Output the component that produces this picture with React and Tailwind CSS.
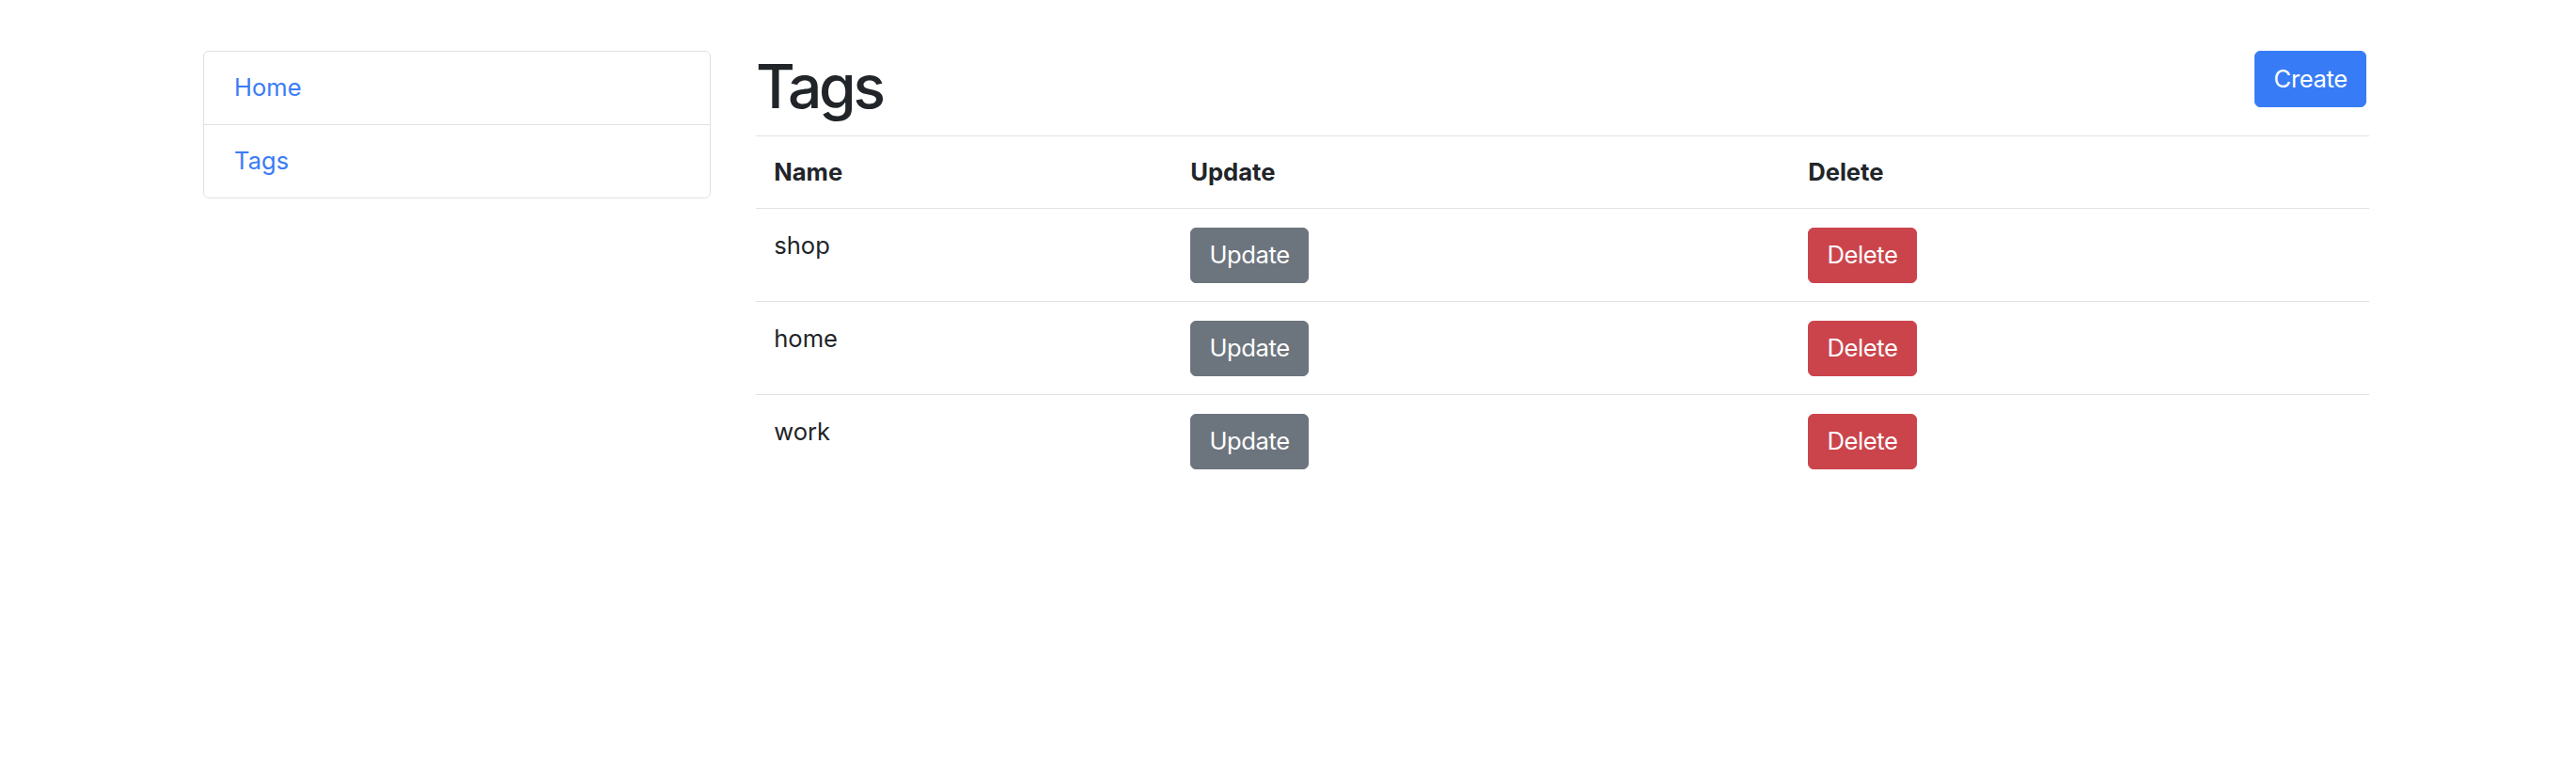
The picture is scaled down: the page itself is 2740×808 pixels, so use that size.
const tags = ['shop', 'home', 'work'];

function Sidebar() {
  return (
    <div className="w-[540px] shrink-0 self-start rounded-[6px] border border-[#dee2e6] bg-white">
      <a href="#" className="block px-[32px] py-[19.2px] leading-[38.4px] text-[#3a7cf6]">
        Home
      </a>
      <a href="#" className="block border-t border-[#dee2e6] px-[32px] py-[19.2px] leading-[38.4px] text-[#3a7cf6]">
        Tags
      </a>
    </div>
  );
}

function TagTable() {
  return (
    <table className="w-full table-fixed border-collapse text-left">
      <thead>
        <tr className="border-t border-b border-[#dee2e6]">
          <th className="w-[443px] px-[19.2px] py-[19.2px] align-bottom font-bold leading-[38.4px]">Name</th>
          <th className="w-[657px] px-[19.2px] py-[19.2px] align-bottom font-bold leading-[38.4px]">Update</th>
          <th className="px-[19.2px] py-[19.2px] align-bottom font-bold leading-[38.4px]">Delete</th>
        </tr>
      </thead>
      <tbody>
        {tags.map((tag, i) => (
          <tr key={tag} className={i > 0 ? 'border-t border-[#dee2e6]' : ''}>
            <td className="px-[19.2px] py-[19.2px] align-top leading-[38.4px]">{tag}</td>
            <td className="px-[19.2px] py-[19.2px] align-top">
              <button className="rounded-[6px] border border-[#6c747d] bg-[#6c747d] px-[19.2px] py-[9.6px] leading-[38.4px] tracking-[-0.015em] text-white">
                Update
              </button>
            </td>
            <td className="px-[19.2px] py-[19.2px] align-top">
              <button className="rounded-[6px] border border-[#cb444c] bg-[#cb444c] px-[19.2px] py-[9.6px] leading-[38.4px] tracking-[-0.015em] text-white">
                Delete
              </button>
            </td>
          </tr>
        ))}
      </tbody>
    </table>
  );
}

export default function App() {
  return (
    <div className="min-h-[808px] bg-white pt-[54px] font-['Inter',sans-serif] text-[25.6px] text-[#212529]">
      <div className="ml-[216px] flex w-[2304px] gap-[48px]">
        <Sidebar />
        <div className="flex-1">
          <div className="mb-[12.8px] flex items-start justify-between">
            <h1 className="text-[64px] font-medium leading-[76.8px] tracking-[-0.05em]">Tags</h1>
            <button className="mr-[3px] rounded-[6px] border border-[#377cf6] bg-[#377cf6] px-[19.2px] py-[9.6px] leading-[38.4px] tracking-[-0.015em] text-white">
              Create
            </button>
          </div>
          <TagTable />
        </div>
      </div>
    </div>
  );
}
